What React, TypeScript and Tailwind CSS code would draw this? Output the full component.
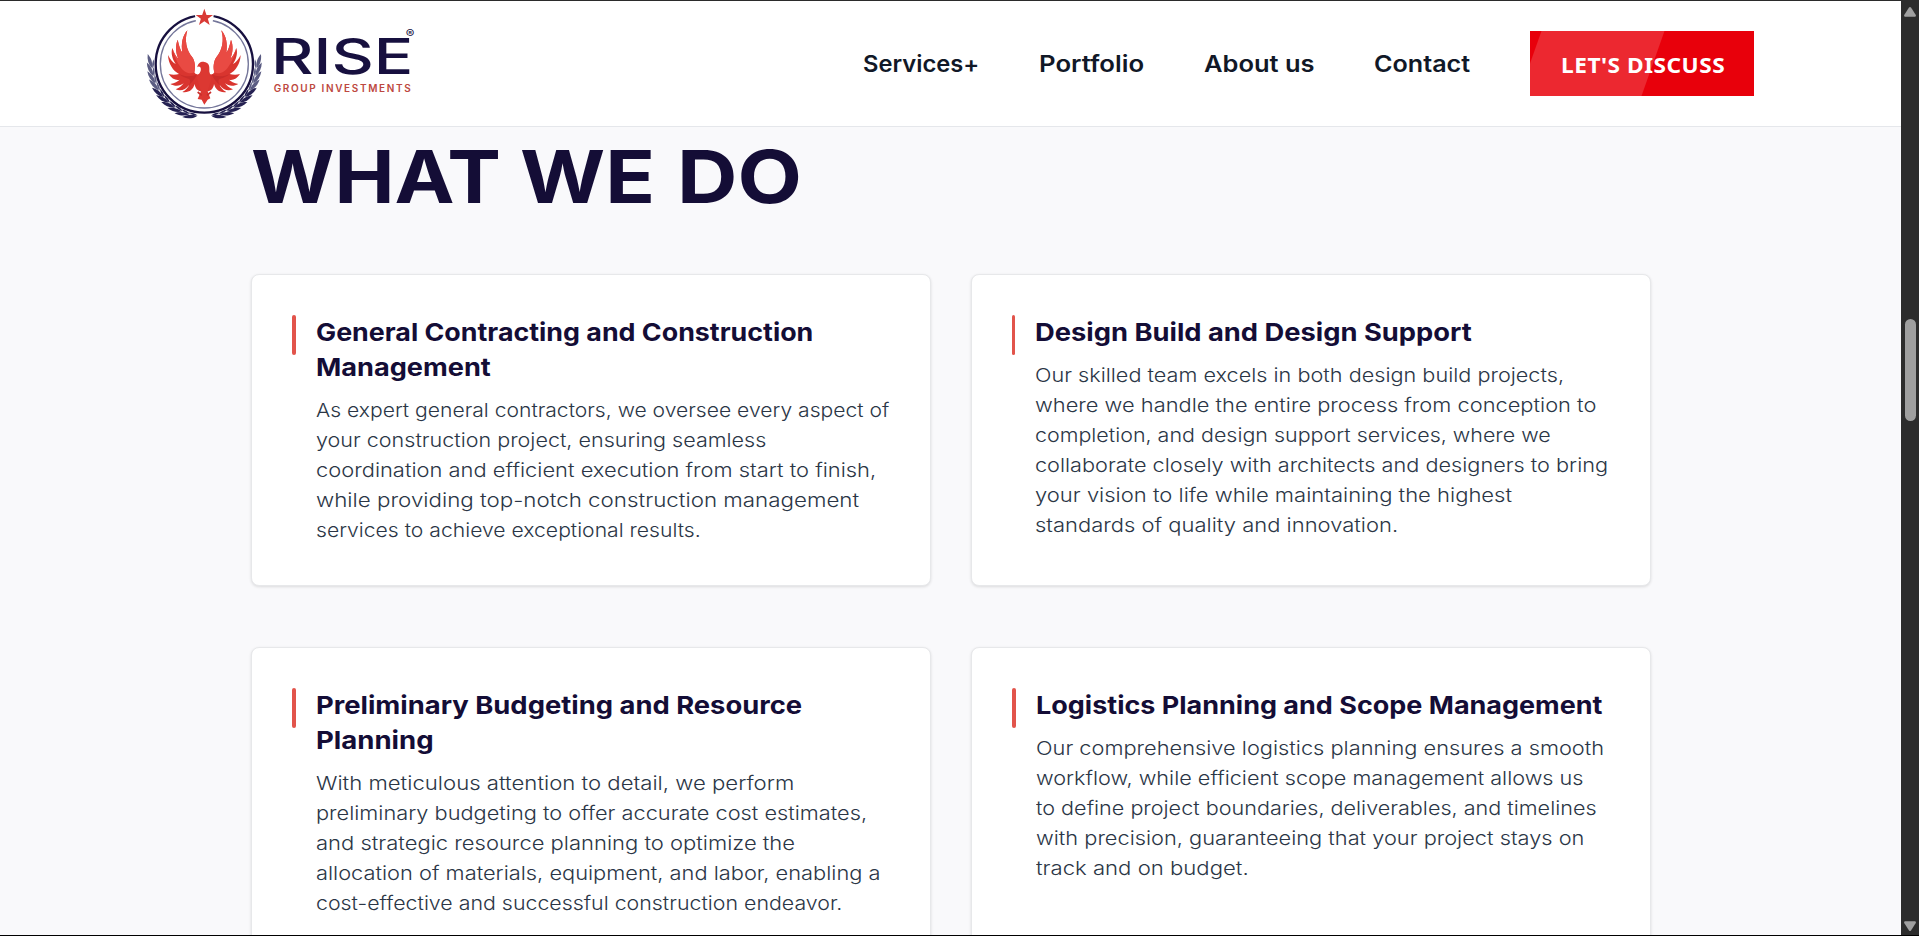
import { useLayoutEffect, useRef, useState } from "react";

type FitProps = { text: string; width: number; className?: string };

/** A single line of text stretched horizontally to a set measure. */
function Fit({ text, width, className = "" }: FitProps) {
  const ref = useRef<HTMLSpanElement>(null);
  const [scale, setScale] = useState(1);
  useLayoutEffect(() => {
    if (ref.current) setScale(width / ref.current.offsetWidth);
  }, [width, text]);
  return (
    <span className="block" style={{ width }}>
      <span
        ref={ref}
        className={"inline-block origin-left whitespace-nowrap align-top " + className}
        style={{ transform: `scaleX(${scale})` }}
      >
        {text}
      </span>
    </span>
  );
}

type Line = [string, number];
type Service = { title: Line[]; body: Line[]; bar: string };

const services: Service[] = [
  {
    bar: "w-1 mr-5",
    title: [["General Contracting and Construction", 497], ["Management", 175]],
    body: [
      ["As expert general contractors, we oversee every aspect of", 573],
      ["your construction project, ensuring seamless", 450],
      ["coordination and efficient execution from start to finish,", 560],
      ["while providing top-notch construction management", 543],
      ["services to achieve exceptional results.", 385],
    ],
  },
  {
    bar: "w-[3px] mr-5",
    title: [["Design Build and Design Support", 437]],
    body: [
      ["Our skilled team excels in both design build projects,", 529],
      ["where we handle the entire process from conception to", 561],
      ["completion, and design support services, where we", 516],
      ["collaborate closely with architects and designers to bring", 573],
      ["your vision to life while maintaining the highest", 477],
      ["standards of quality and innovation.", 363],
    ],
  },
  {
    bar: "w-1 mr-5",
    title: [["Preliminary Budgeting and Resource", 486], ["Planning", 118]],
    body: [
      ["With meticulous attention to detail, we perform", 478],
      ["preliminary budgeting to offer accurate cost estimates,", 551],
      ["and strategic resource planning to optimize the", 479],
      ["allocation of materials, equipment, and labor, enabling a", 565],
      ["cost-effective and successful construction endeavor.", 526],
    ],
  },
  {
    bar: "w-1 mr-5",
    title: [["Logistics Planning and Scope Management", 567]],
    body: [
      ["Our comprehensive logistics planning ensures a smooth", 568],
      ["workflow, while efficient scope management allows us", 548],
      ["to define project boundaries, deliverables, and timelines", 560],
      ["with precision, guaranteeing that your project stays on", 548],
      ["track and on budget.", 213],
    ],
  },
];

const leaves = Array.from({ length: 10 }, (_, i) => i);

function HalfEmblem() {
  return (
    <g>
      {leaves.map((i) => (
        <g key={i} transform={`rotate(${-3 - i * 8.6} 178 180)`} fill={i < 4 ? "#5a5b82" : "#252152"}>
          <path d="M20 184C10 172 7 158 10 141C19 152 25 168 20 184Z" />
          <path d="M22 186C20 176 22 166 27 158C29 168 28 178 22 186Z" />
        </g>
      ))}
      <path
        fill="#d9352f"
        d="M148 205C153 213 160 213 166 208L170 262C158 262 150 252 149 240C144 257 132 267 112 264C123 258 130 250 132 243C122 258 106 262 92 256C104 252 112 244 116 238C104 248 88 247 76 240C90 238 98 232 104 227C92 230 80 224 71 210C84 214 94 212 102 210C84 200 70 180 69 153C76 168 84 176 92 180C82 165 77 148 82 132C88 150 94 160 100 164C92 145 91 125 98 107C102 125 106 138 112 146C108 120 112 96 127 79C118 108 124 140 142 160C150 172 152 190 148 205Z"
      />
      <path
        fill="#e94a43"
        d="M148 205C132 212 116 204 106 188C98 178 88 160 82 132C88 150 94 160 100 164C92 145 91 125 98 107C102 125 106 138 112 146C108 120 112 96 127 79C118 108 124 140 142 160C150 172 152 190 148 205Z"
      />
      <path fill="#c92d2a" d="M102 210C122 220 142 218 156 211C150 226 140 236 132 243C138 232 136 226 130 224C122 222 110 218 102 210Z" />
    </g>
  );
}

function Logo() {
  return (
    <svg width="284" height="120" viewBox="0 0 852 360" aria-label="Rise Group Investments">
      <circle cx="178" cy="180" r="146" fill="none" stroke="#17103f" strokeWidth="7" />
      <circle cx="178" cy="180" r="132" fill="none" stroke="#74769a" strokeWidth="4" />
      <path d="M148 22H208L202 60H154Z" fill="#fff" />
      <path d="M178 14L184.500 33H204L188.500 44.500L194 63L178 52L162 63L167.500 44.500L152 33H171.500Z" fill="#d93a35" />
      <HalfEmblem />
      <g transform="translate(356 0) scale(-1 1)">
        <HalfEmblem />
      </g>
      <path
        fill="#dc3832"
        d="M157 190C158 178 168 172 178 174C188 175 194 183 193 195C192 206 196 212 200 222L188 262L196 283L188 287L178 302L170 287L158 285L168 262L156 222C160 210 170 204 167 191C163 187 160 187 157 190Z"
      />
      <path d="M158 264L170 274M198 264L186 274" stroke="#c92d2a" strokeWidth="5" />
      <g fontFamily="Inter, 'Liberation Sans', sans-serif">
        <text x="378" y="209" fontSize="146" fontWeight="450" fill="#17103f" textLength="427" lengthAdjust="spacingAndGlyphs">
          RISE
        </text>
        <text x="386" y="263" fontSize="30" fontWeight="600" fill="#bd4840" textLength="411" lengthAdjust="spacing">
          GROUP INVESTMENTS
        </text>
        <text x="782" y="103" fontSize="34" fill="#17103f" textLength="26" lengthAdjust="spacingAndGlyphs">
          ®
        </text>
      </g>
    </svg>
  );
}

function Card({ title, body, bar }: Service) {
  return (
    <article className="flex items-start rounded-lg border border-[#e7e8ea] bg-white p-10 shadow-[0_1px_3px_rgba(0,0,0,0.12)]">
      <div className={"h-10 shrink-0 rounded-full bg-[#e2544b] " + bar} />
      <div>
        <h3 className="mb-[11px] text-[24.500px] leading-[35px] font-bold text-[#140d36]">
          {title.map(([t, w]) => (
            <Fit key={t} text={t} width={w} />
          ))}
        </h3>
        <p className="text-[19px] leading-[30px] font-light text-[#2b3646]">
          {body.map(([t, w]) => (
            <Fit key={t} text={t} width={w} />
          ))}
        </p>
      </div>
    </article>
  );
}

export default function App() {
  return (
    <div className="flex h-[936px] w-[1919px] flex-col overflow-hidden border-b border-black bg-[#f9f9fb] font-['Inter','Liberation_Sans',sans-serif]">
      <div className="flex min-h-0 flex-1">
        <div className="flex min-w-0 flex-1 flex-col overflow-hidden border-t border-[#2b2b2b] bg-[#f9f9fb]">
          <header className="flex h-[126px] shrink-0 items-center border-b border-[#e5e7eb] bg-white pl-[145px]">
            <Logo />
            <nav className="ml-[434px] flex items-center text-[22.500px] leading-8 font-semibold text-[#111827]">
              <Fit text="Services+" width={116} />
              <div className="ml-[60px]"><Fit text="Portfolio" width={105} /></div>
              <div className="ml-[60px]"><Fit text="About us" width={111} /></div>
              <div className="ml-[59px]"><Fit text="Contact" width={96} /></div>
            </nav>
            <button className="relative ml-[60px] flex h-[65px] w-56 items-center justify-center overflow-hidden bg-[#e8000b] pr-0.5 font-['Noto_Sans','Open_Sans',sans-serif] text-[22px] leading-8 font-bold text-white">
              <span className="absolute inset-y-0 left-0 w-[123px] -skew-x-[19.5deg] bg-[#ec2830]" />
              <span className="relative">
                <Fit text="LET'S DISCUSS" width={164} className="tracking-[0.5px]" />
              </span>
            </button>
          </header>
          <main className="pl-[251px]">
            <h2 className="mt-1.5 mb-[53px] flex text-[73px] leading-[88px] font-bold text-[#140d36]">
              <Fit text="WHAT" width={250} />
              <span className="ml-[19px]"><Fit text="WE" width={135} /></span>
              <span className="ml-[22px]"><Fit text="DO" width={125} /></span>
            </h2>
            <section className="grid w-[1400px] grid-cols-2 grid-rows-[312px_345px] gap-x-10 gap-y-[60.5px]">
              {services.map((s) => (
                <Card key={s.title[0][0]} {...s} />
              ))}
            </section>
          </main>
        </div>
        <aside className="flex w-[18px] shrink-0 flex-col items-center bg-[#2c2c2c] pt-[7px] pb-1">
          <svg width="12" height="10" viewBox="0 0 12 10" fill="#a0a0a0">
            <path d="M5 .6Q6-.4 7 .6L11.800 8Q12.200 9.600 10.800 9.800H1.200Q-.2 9.600.2 8Z" />
          </svg>
          <div className="mt-[302px] h-[102px] w-[11px] rounded-full bg-[#9f9f9f]" />
          <svg className="mt-auto" width="12" height="10" viewBox="0 0 12 10" fill="#a0a0a0">
            <path d="M5 9.400Q6 10.400 7 9.400L11.800 2Q12.200.4 10.800.2H1.200Q-.2.4.2 2Z" />
          </svg>
        </aside>
      </div>
    </div>
  );
}
